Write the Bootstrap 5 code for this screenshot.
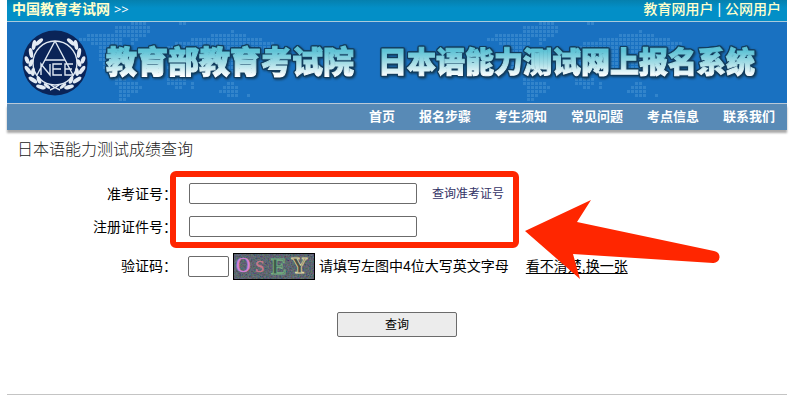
<!DOCTYPE html>
<html lang="zh-CN">
<head>
<meta charset="utf-8">
<meta name="viewport" content="width=device-width, initial-scale=1">
<title>日本语能力测试成绩查询</title>
<link href="https://cdn.jsdelivr.net/npm/bootstrap@5.3.0/dist/css/bootstrap.min.css" rel="stylesheet">
<style>
body{font-family:"Liberation Sans","Noto Sans CJK SC",sans-serif;font-size:14px;line-height:20px;color:#000;background:#fff}
.page-wrap{margin:0 7px}
.top-strip{height:22px;padding:0 6px 3px 5px;background:linear-gradient(#0580ae,#038fc7 8px);border-bottom:1px solid #a9cbdc;color:#fff}
.top-strip a{color:#ffc;text-decoration:none}
.chevrons{font-family:"Noto Sans",sans-serif;font-size:13px}
.user-links{font-weight:500}
.hero{height:82px;background:#1971c1;border-bottom:1px solid #b9c9d8;position:relative;white-space:nowrap}
.hero-map{position:absolute;inset:0;width:100%;height:100%}
.emblem{width:66px;height:66px;margin-left:15px;position:relative}
.hero-title{position:relative;margin:0;font-weight:900;line-height:40px;filter:drop-shadow(1px 0 0 #123d5e) drop-shadow(-1px 0 0 #123d5e) drop-shadow(0 1px 0 #123d5e) drop-shadow(0 -1px 0 #123d5e) drop-shadow(1px 1px 1px #123d5e)}
.hero-title span{display:block;background:linear-gradient(#5fc3d6 8px,#a5dde6 20px,#fff 33px);-webkit-background-clip:text;background-clip:text;color:transparent;-webkit-text-stroke:1px transparent}
.title-org{font-size:31px;margin-left:18px}
.title-sys{font-size:29px;margin-left:24px}
.main-nav{height:26px;background:#588ab6;padding-right:12px;gap:24px;font-size:13px;font-weight:700;box-shadow:0 3px 2px #aaa}
.main-nav a{color:#fff;text-decoration:none}
.query-title{font-size:16px;font-weight:300;line-height:24px;margin:8px 0 0 10px;color:#222}
.field-label{width:170px;text-align:right;margin-right:12px;flex:none}
.field-box{height:21px;border:1px solid #6b6b6b;border-radius:2px;padding:0 3px;background:#fff}
.wide-box{width:228px}
.code-box{width:41px}
.marked{position:relative;margin-top:9px;padding:12px 0 11px;display:grid;row-gap:12px}
.marked-frame{position:absolute;top:0;left:163px;width:349px;height:100%;border:6px solid #ff2600;border-radius:6px;pointer-events:none}
.marked-arrow{position:absolute;left:518px;top:28px;width:196px;height:82px;pointer-events:none;z-index:2}
.form-line{height:21px}
.lookup{font-size:12px;color:#333366;text-decoration:none;margin-left:15px}
.code-line{height:28px;margin-top:4px}
.code-line .field-label{margin-right:11px}
.swap{color:#000;text-decoration:underline;text-underline-offset:2px;margin-left:17px}
.captcha{width:82px;height:27px;margin:0 4px}
.send{width:120px;height:25px;font-size:12px;line-height:20px;background:#ececec;border:1px solid #6b6b6b;border-radius:2px;margin-top:32px;padding:0;color:#000}
.foot-rule{border-top:1px solid #c4c4c4;margin-top:57px}
</style>
<script src="https://cdn.jsdelivr.net/npm/bootstrap@5.3.0/dist/js/bootstrap.bundle.min.js"></script>
</head>
<body>
<div class="page-wrap">
<header>
<div class="top-strip d-flex justify-content-between align-items-center">
<div><a href="#" class="fw-bold">中国教育考试网</a> <span class="chevrons">&gt;&gt;</span></div>
<div class="user-links"><a href="#">教育网用户</a> | <a href="#">公网用户</a></div>
</div>
<div class="hero d-flex align-items-center">
<svg class="hero-map" viewBox="0 0 780 81" preserveAspectRatio="xMidYMid slice" aria-hidden="true">
<defs>
<pattern id="dots" width="4" height="4" patternUnits="userSpaceOnUse"><rect width="3" height="3" fill="#4a96d4"/></pattern>
<g id="continents" fill="url(#dots)">
<path d="M4 16h8v-4h28v-8h16V0h16v4h4v8h-4v4h-8v4h-4v4h-4v-8h-8v12h4v4h-8v8h-8v8h-8v-8h-4V24H16v-4H4zM44 56h8v4h12v4h4v4h-4v4h-8v4h-4v4h-8V64h-4v-8zM92 24h8v-4h16v-4h20v-4h20v-4h4v4h12v4h16v4h12v8h-12v4h-8v8h-4v4h-8v8H96v-4h-4v-4h4v-8h-4zM104 0h8v4h-8zM92 56h20v8h-4v4h-8v-4h-8zM116 60h4v8h-4zM148 64h4v-4h8v4h4v12h-12v-4h-8v-4h4zM172 72h4v4h-4z"/>
</g>
</defs>
<use href="#continents" x="68" opacity=".5"/><use href="#continents" x="476" opacity=".5"/>
</svg>
<svg class="emblem flex-shrink-0" viewBox="0 0 66 66" role="img" aria-label="NEEA">
<circle cx="33" cy="33" r="32.5" fill="#0a2458"/>
<g fill="none" stroke="#dfe8f2" stroke-width="1.4"><circle cx="33" cy="33" r="22"/><path d="M33 11 15 45M33 11 51 45M23 30h20M19 45V34l9 11V34M40 34h-9v11h9M31 39h8M51 34h-8v11h8M43 39h7"/></g>
<g id="laurel" fill="#e4ebf3"><ellipse cx="17" cy="12" rx="2" ry="5" transform="rotate(50 17 12)"/><ellipse cx="12" cy="15" rx="2" ry="5" transform="rotate(10 12 15)"/><ellipse cx="9" cy="23" rx="2" ry="5" transform="rotate(-10 9 23)"/><ellipse cx="5" cy="30" rx="2" ry="4" transform="rotate(-20 5 30)"/><ellipse cx="9" cy="33" rx="2" ry="4" transform="rotate(20 9 33)"/><ellipse cx="6" cy="40" rx="2" ry="5" transform="rotate(-35 6 40)"/><ellipse cx="11" cy="42" rx="2" ry="4" transform="rotate(5 11 42)"/><ellipse cx="11" cy="50" rx="2" ry="5" transform="rotate(-55 11 50)"/><ellipse cx="17" cy="50" rx="2" ry="4" transform="rotate(-20 17 50)"/><ellipse cx="19" cy="57" rx="2" ry="5" transform="rotate(-75 19 57)"/><ellipse cx="25" cy="56" rx="1.5" ry="4" transform="rotate(-50 25 56)"/></g>
<use href="#laurel" transform="translate(66 0) scale(-1 1)"/>
<path d="M28 60q5-2 9-5M38 60q-5-2-9-5" stroke="#e4ebf3" fill="none" stroke-width="1.5"/>
</svg>
<div class="hero-title title-org"><span>教育部教育考试院</span></div>
<h1 class="hero-title title-sys"><span>日本语能力测试网上报名系统</span></h1>
</div>
<nav class="main-nav d-flex justify-content-end align-items-center">
<a href="#">首页</a><a href="#">报名步骤</a><a href="#">考生须知</a><a href="#">常见问题</a><a href="#">考点信息</a><a href="#">联系我们</a>
</nav>
</header>
<main>
<h2 class="query-title">日本语能力测试成绩查询</h2>
<form>
<div class="marked">
<div class="form-line d-flex align-items-center"><label class="field-label" for="ticket">准考证号：</label><input class="field-box wide-box" id="ticket" type="text"><a class="lookup" href="#">查询准考证号</a></div>
<div class="form-line d-flex align-items-center"><label class="field-label" for="idno">注册证件号：</label><input class="field-box wide-box" id="idno" type="text"></div>
<div class="marked-frame"></div>
<svg class="marked-arrow" viewBox="0 0 196 82" aria-hidden="true"><path d="M0 32 66 1 52 23 189 52a6 6 0 0 1-1 12L48 55l7 25z" fill="#ff2600"/></svg>
</div>
<div class="code-line d-flex align-items-center"><label class="field-label" for="code">验证码：</label><input class="field-box code-box" id="code" type="text">
<svg class="captcha flex-shrink-0" viewBox="0 0 82 27" role="img" aria-label="验证码图片">
<defs><filter id="grain" x="0" y="0" width="100%" height="100%"><feTurbulence type="fractalNoise" baseFrequency=".6" numOctaves="2" seed="4"/><feColorMatrix values="1 0 0 0 -.2  0 1 0 0 -.15  0 0 1 0 -.1  0 0 0 0 .4"/></filter></defs>
<rect width="82" height="27" fill="#38404a"/><rect width="82" height="27" filter="url(#grain)"/>
<rect x=".5" y=".5" width="81" height="26" fill="none" stroke="#000"/>
<g font-family="Liberation Serif,serif"><text x="3" y="19" font-size="20" fill="#d583d8" stroke="#d583d8" stroke-width=".4">O</text><text x="22" y="19" font-size="17" fill="#c77a8c" stroke="#c77a8c" stroke-width=".4">S</text><text x="38" y="21" font-size="23" font-weight="bold" fill="#3e5a4c" stroke="#79b184" stroke-width=".8">E</text><text x="58" y="20" font-size="23" font-weight="bold" fill="#4a4e44" stroke="#e0d8a4" stroke-width=".8">Y</text></g>
</svg>
<span>请填写左图中4位大写英文字母</span><a class="swap" href="#">看不清楚,换一张</a></div>
<div class="text-center"><button class="send" type="submit">查询</button></div>
</form>
</main>
<footer class="foot-rule"></footer>
</div>
</body>
</html>
